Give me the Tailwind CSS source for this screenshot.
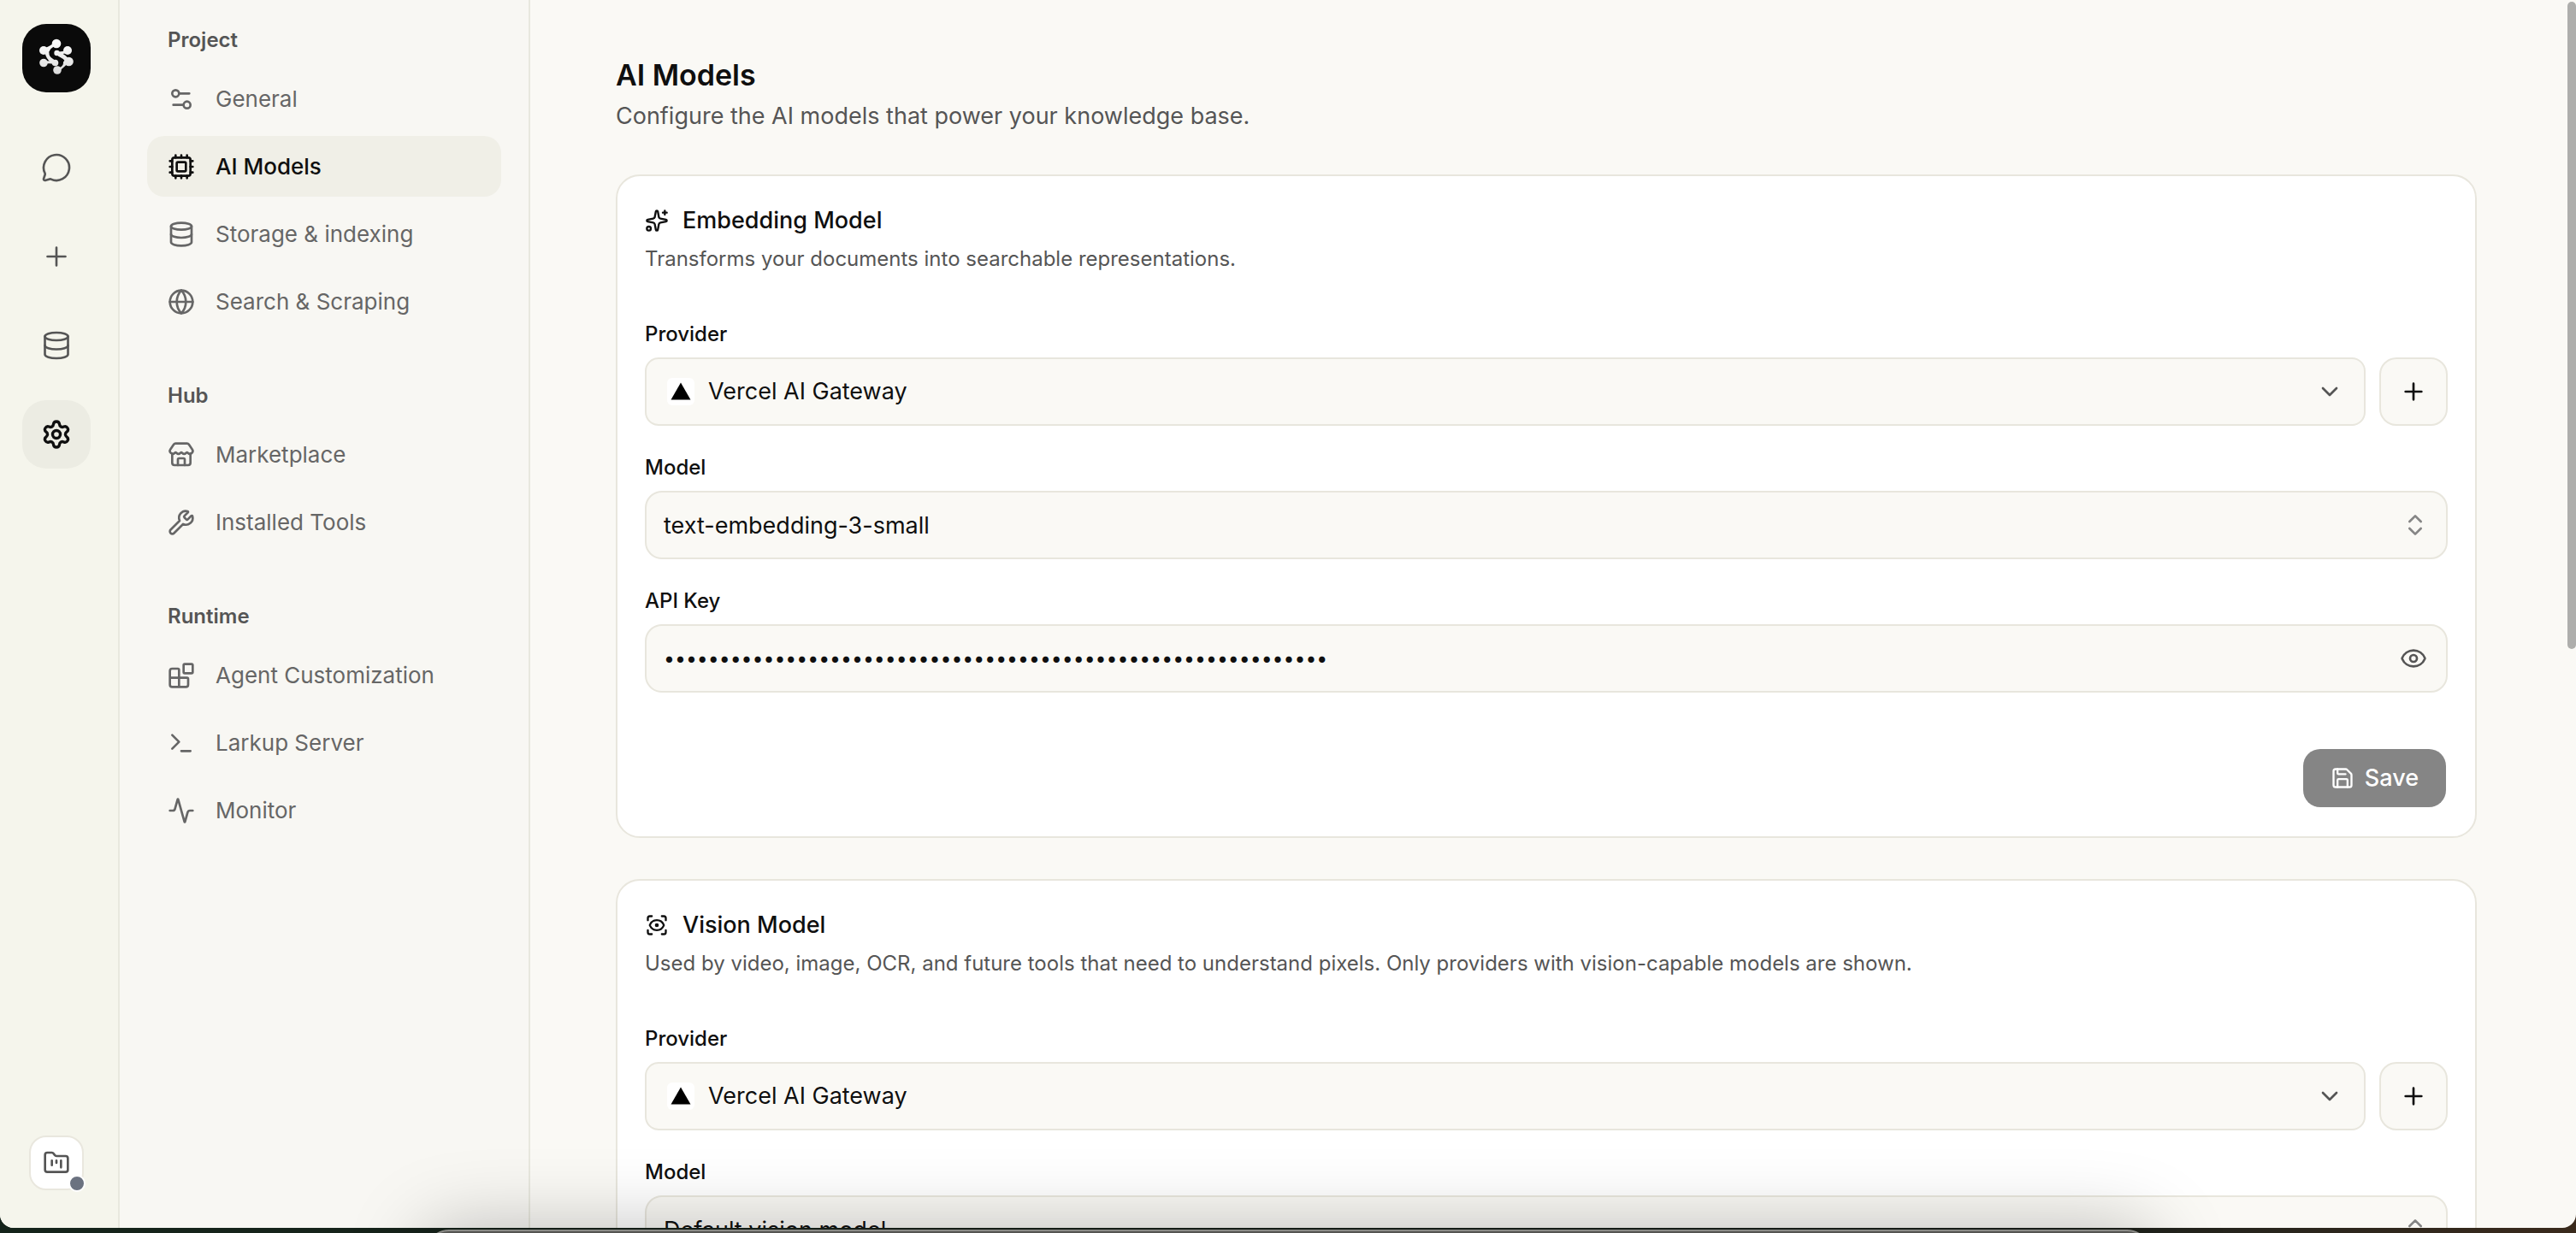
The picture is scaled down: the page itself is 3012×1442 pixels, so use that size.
<!DOCTYPE html>
<html lang="en">
<head>
  <meta charset="UTF-8">
  <meta name="viewport" content="width=device-width, initial-scale=1.0">
  <title>AI Models - Larkup</title>
  <script src="https://cdn.jsdelivr.net/npm/@tailwindcss/browser@4"></script>
  <style>
    body {
      font-family: Inter, "Liberation Sans", sans-serif;
    }
    /* line icons share the same drawing settings */
    .icon {
      fill: none;
      stroke: currentColor;
      stroke-linecap: round;
      stroke-linejoin: round;
      flex-shrink: 0;
    }
  </style>
</head>
<body class="relative h-screen overflow-hidden bg-linear-to-r from-[#14231a] via-[#1b211c] via-80% to-[#3a2a1c] text-[#0f0f0f]">

  <!-- App window -->
  <div class="flex h-[calc(100vh-6px)] overflow-hidden rounded-b-2xl bg-[#faf9f5]">

    <!-- Icon rail -->
    <aside class="flex w-[140px] shrink-0 flex-col items-start border-r-2 border-[#e8e8de] bg-[#f5f5ec] pt-7 pb-11 pl-[26px] text-[#555]">
      <a href="#" aria-label="Home" class="flex size-20 items-center justify-center rounded-[28px] bg-[#0a0a0a]">
        <svg class="size-[60px]" viewBox="0 0 60 60" stroke-linecap="round" fill="none">
          <defs>
            <linearGradient id="shine" x1="0" y1="8" x2="0" y2="50" gradientUnits="userSpaceOnUse">
              <stop offset="0" stop-color="#ffffff"/>
              <stop offset="1" stop-color="#d9d9d9"/>
            </linearGradient>
          </defs>
          <g stroke="url(#shine)">
            <path d="M29 14Q24 19 16 21" stroke-width="6"/>
            <path d="M19 23Q20 30 26 34" stroke-width="5"/>
            <path d="M34 26Q39 28 43 33Q38 38 32 43" stroke-width="5"/>
          </g>
          <path d="M39 16.500C31 14.500 22.500 20 23.500 25.500C24.500 31 35 28.500 36 34.500C36.500 38.500 33 40.500 25 41.500" stroke="#0a0a0a" stroke-width="4"/>
          <g stroke="url(#shine)" stroke-width="3">
            <path d="M43 21Q38 24.500 31 24"/>
            <path d="M15 35.500Q21 34 28 35.500"/>
          </g>
          <g fill="url(#shine)">
            <circle cx="30" cy="13" r="5.300"/>
            <circle cx="15" cy="21" r="5"/>
            <circle cx="43" cy="21" r="5"/>
            <circle cx="30.500" cy="24" r="3.200"/>
            <circle cx="15" cy="35.500" r="4.800"/>
            <circle cx="28.500" cy="35.500" r="3.800"/>
            <circle cx="44.500" cy="34" r="5.300"/>
            <circle cx="31" cy="44" r="4.800"/>
          </g>
        </svg>
      </a>
      <nav class="mt-12 flex flex-col gap-6">
        <button type="button" aria-label="Chat" class="flex size-20 items-center justify-center rounded-[28px]">
          <svg class="icon size-9" viewBox="0 0 24 24" stroke-width="1.75"><path d="M2.992 16.342a2 2 0 0 1 .094 1.167l-1.065 3.290a1 1 0 0 0 1.236 1.168l3.413-.998a2 2 0 0 1 1.099.092 10 10 0 1 0-4.777-4.719"/></svg>
        </button>
        <button type="button" aria-label="New" class="flex size-20 items-center justify-center rounded-[28px]">
          <svg class="icon size-9" viewBox="0 0 24 24" stroke-width="1.75"><path d="M5 12h14M12 5v14"/></svg>
        </button>
        <button type="button" aria-label="Data" class="flex size-20 items-center justify-center rounded-[28px]">
          <svg class="icon size-9" viewBox="0 0 24 24" stroke-width="1.75"><ellipse cx="12" cy="5" rx="9" ry="3"/><path d="M3 5v14a9 3 0 0 0 18 0V5"/><path d="M3 12a9 3 0 0 0 18 0"/></svg>
        </button>
        <button type="button" aria-label="Settings" class="flex size-20 items-center justify-center rounded-[28px] bg-[#ecece3] text-[#0f0f0f]">
          <svg class="icon size-9" viewBox="0 0 24 24" stroke-width="2.25"><path d="M9.671 4.136a2.340 2.340 0 0 1 4.659 0 2.340 2.340 0 0 0 3.319 1.915 2.340 2.340 0 0 1 2.330 4.033 2.340 2.340 0 0 0 0 3.831 2.340 2.340 0 0 1-2.330 4.033 2.340 2.340 0 0 0-3.319 1.915 2.340 2.340 0 0 1-4.659 0 2.340 2.340 0 0 0-3.320-1.915 2.340 2.340 0 0 1-2.330-4.033 2.340 2.340 0 0 0 0-3.831A2.340 2.340 0 0 1 6.350 6.051a2.340 2.340 0 0 0 3.319-1.915"/><circle cx="12" cy="12" r="3"/></svg>
        </button>
      </nav>
      <button type="button" aria-label="Switch project" class="relative mt-auto ml-2 flex size-16 items-center justify-center rounded-[20px] border-2 border-[#e9e7de] bg-white">
        <svg class="icon size-8" viewBox="0 0 24 24" stroke-width="2"><path d="M4 20h16a2 2 0 0 0 2-2V8a2 2 0 0 0-2-2h-7.930a2 2 0 0 1-1.660-.9l-.820-1.200A2 2 0 0 0 7.930 3H4a2 2 0 0 0-2 2v13c0 1.100.9 2 2 2Z"/><path d="M8 10v4M12 10v2M16 10v6"/></svg>
        <span class="absolute -right-1 -bottom-1 size-5 rounded-full border-2 border-white bg-[#6b7280]"></span>
      </button>
    </aside>

    <!-- Settings navigation -->
    <nav class="flex w-[480px] shrink-0 flex-col gap-[57px] border-r-2 border-[#e8e8de] bg-[#f8f7f3] px-8 pt-[29px] text-[26px] text-[#666]">
      <section>
        <h2 class="mb-[15px] pl-6 text-[24px] leading-9 font-semibold text-[#555]">Project</h2>
        <ul class="flex flex-col gap-2">
          <li><a href="#" class="flex h-[71px] items-center gap-6 rounded-[20px] px-6">
            <svg class="icon size-8" viewBox="0 0 24 24" stroke-width="2"><path d="M14 17H5M19 7h-9"/><circle cx="17" cy="17" r="3"/><circle cx="7" cy="7" r="3"/></svg>
            General</a></li>
          <li><a href="#" aria-current="page" class="flex h-[71px] items-center gap-6 rounded-[20px] bg-[#f0efe7] px-6 font-medium text-[#0f0f0f]">
            <svg class="icon size-8" viewBox="0 0 24 24" stroke-width="2"><path d="M12 20v2M12 2v2M17 20v2M17 2v2M2 12h2M2 17h2M2 7h2M20 12h2M20 17h2M20 7h2M7 20v2M7 2v2"/><rect x="4" y="4" width="16" height="16" rx="2"/><rect x="8" y="8" width="8" height="8" rx="1"/></svg>
            AI Models</a></li>
          <li><a href="#" class="flex h-[71px] items-center gap-6 rounded-[20px] px-6">
            <svg class="icon size-8" viewBox="0 0 24 24" stroke-width="2"><ellipse cx="12" cy="5" rx="9" ry="3"/><path d="M3 5v14a9 3 0 0 0 18 0V5"/><path d="M3 12a9 3 0 0 0 18 0"/></svg>
            Storage &amp; indexing</a></li>
          <li><a href="#" class="flex h-[71px] items-center gap-6 rounded-[20px] px-6">
            <svg class="icon size-8" viewBox="0 0 24 24" stroke-width="2"><circle cx="12" cy="12" r="10"/><path d="M12 2a14.500 14.500 0 0 0 0 20 14.500 14.500 0 0 0 0-20M2 12h20"/></svg>
            Search &amp; Scraping</a></li>
        </ul>
      </section>
      <section>
        <h2 class="mb-[15px] pl-6 text-[24px] leading-9 font-semibold text-[#555]">Hub</h2>
        <ul class="flex flex-col gap-2">
          <li><a href="#" class="flex h-[71px] items-center gap-6 rounded-[20px] px-6">
            <svg class="icon size-8" viewBox="0 0 24 24" stroke-width="2"><path d="M15 21v-5a1 1 0 0 0-1-1h-4a1 1 0 0 0-1 1v5"/><path d="M17.774 10.310a1.120 1.120 0 0 0-1.549 0 2.500 2.500 0 0 1-3.451 0 1.120 1.120 0 0 0-1.548 0 2.500 2.500 0 0 1-3.452 0 1.120 1.120 0 0 0-1.549 0 2.500 2.500 0 0 1-3.770-3.248l2.889-4.184A2 2 0 0 1 7 2h10a2 2 0 0 1 1.653.873l2.895 4.192a2.500 2.500 0 0 1-3.774 3.244"/><path d="M4 10.950V19a2 2 0 0 0 2 2h12a2 2 0 0 0 2-2v-8.050"/></svg>
            Marketplace</a></li>
          <li><a href="#" class="flex h-[71px] items-center gap-6 rounded-[20px] px-6">
            <svg class="icon size-8" viewBox="0 0 24 24" stroke-width="2"><path d="M14.700 6.300a1 1 0 0 0 0 1.400l1.600 1.600a1 1 0 0 0 1.400 0l3.106-3.105c.32-.322.863-.22.983.218a6 6 0 0 1-8.259 7.057l-7.910 7.910a1 1 0 0 1-2.999-3l7.910-7.910a6 6 0 0 1 7.057-8.259c.438.12.54.662.219.984z"/></svg>
            Installed Tools</a></li>
        </ul>
      </section>
      <section>
        <h2 class="mb-[15px] pl-6 text-[24px] leading-9 font-semibold text-[#555]">Runtime</h2>
        <ul class="flex flex-col gap-2">
          <li><a href="#" class="flex h-[71px] items-center gap-6 rounded-[20px] px-6">
            <svg class="icon size-8" viewBox="0 0 24 24" stroke-width="2"><path d="M10 22V7a1 1 0 0 0-1-1H4a2 2 0 0 0-2 2v12a2 2 0 0 0 2 2h12a2 2 0 0 0 2-2v-5a1 1 0 0 0-1-1H2"/><rect x="14" y="2" width="8" height="8" rx="1"/></svg>
            Agent Customization</a></li>
          <li><a href="#" class="flex h-[71px] items-center gap-6 rounded-[20px] px-6">
            <svg class="icon size-8" viewBox="0 0 24 24" stroke-width="2"><path d="M12 19h8M4 17l6-6-6-6"/></svg>
            Larkup Server</a></li>
          <li><a href="#" class="flex h-[71px] items-center gap-6 rounded-[20px] px-6">
            <svg class="icon size-8" viewBox="0 0 24 24" stroke-width="2"><path d="M22 12h-2.480a2 2 0 0 0-1.930 1.460l-2.350 8.360a.25.25 0 0 1-.48 0L9.240 2.180a.25.25 0 0 0-.48 0l-2.350 8.360A2 2 0 0 1 4.490 12H2"/></svg>
            Monitor</a></li>
        </ul>
      </section>
    </nav>

    <!-- Page content -->
    <main class="min-w-0 flex-1 overflow-hidden pt-[66px] pr-[116px] pl-[100px]">
      <h1 class="text-[34px] leading-[44px] font-semibold">AI Models</h1>
      <p class="mt-1.5 text-[27px] leading-10 text-[#555]">Configure the AI models that power your knowledge base.</p>

      <section class="mt-12 rounded-[28px] border-2 border-[#e8e6dd] bg-white px-8 pt-8 pb-[34px]">
        <h2 class="flex items-center gap-4 text-[27px] leading-10 font-medium">
          <svg class="icon size-7" viewBox="0 0 24 24" stroke-width="2"><path d="M11.017 2.814a1 1 0 0 1 1.966 0l1.051 5.558a2 2 0 0 0 1.594 1.594l5.558 1.051a1 1 0 0 1 0 1.966l-5.558 1.051a2 2 0 0 0-1.594 1.594l-1.051 5.558a1 1 0 0 1-1.966 0l-1.051-5.558a2 2 0 0 0-1.594-1.594l-5.558-1.051a1 1 0 0 1 0-1.966l5.558-1.051a2 2 0 0 0 1.594-1.594z"/><path d="M20 2v4M22 4h-4"/><circle cx="4" cy="20" r="2"/></svg>
          Embedding Model
        </h2>
        <p class="mt-1.5 text-[24px] leading-[38px] text-[#555]">Transforms your documents into searchable representations.</p>

        <div class="mt-[54px] flex flex-col gap-[34px]">
          <div>
            <label for="embedProvider" class="mb-3 block text-[24px] leading-[30px] font-medium">Provider</label>
            <div class="flex gap-4">
              <div class="relative flex-1">
                <select id="embedProvider" class="h-20 w-full appearance-none rounded-2xl border-2 border-[#e8e6dd] bg-[#faf9f5] pl-[72px] text-[27px]">
                  <option>Vercel AI Gateway</option>
                </select>
                <span class="pointer-events-none absolute top-6 left-[26px] flex size-8 items-center justify-center rounded-md bg-white">
                  <svg class="size-6" viewBox="0 0 24 24"><path d="M12 1.500L23.500 21.500H.5z"/></svg>
                </span>
                <svg class="icon pointer-events-none absolute top-6 right-[26px] size-8 text-[#555]" viewBox="0 0 24 24" stroke-width="2"><path d="m6 9 6 6 6-6"/></svg>
              </div>
              <button type="button" aria-label="Add provider" class="flex size-20 items-center justify-center rounded-[20px] border-2 border-[#e8e6dd] bg-[#faf9f5]">
                <svg class="icon size-8" viewBox="0 0 24 24" stroke-width="2"><path d="M5 12h14M12 5v14"/></svg>
              </button>
            </div>
          </div>

          <div>
            <label for="embedModel" class="mb-3 block text-[24px] leading-[30px] font-medium">Model</label>
            <div class="relative">
              <input id="embedModel" type="text" value="text-embedding-3-small" class="h-20 w-full rounded-[20px] border-2 border-[#e8e6dd] bg-[#faf9f5] pr-16 pl-5 text-[27px]">
              <svg class="icon pointer-events-none absolute top-6 right-[22px] size-8 text-[#858585]" viewBox="0 0 24 24" stroke-width="2"><path d="m7 15 5 5 5-5M7 9l5-5 5 5"/></svg>
            </div>
          </div>

          <div>
            <label for="embedKey" class="mb-3 block text-[24px] leading-[30px] font-medium">API Key</label>
            <div class="relative">
              <input id="embedKey" type="password" value="000000000000000000000000000000000000000000000000000000000000" class="h-20 w-full rounded-[20px] border-2 border-[#e8e6dd] bg-[#faf9f5] pr-20 pl-5 text-[23px]">
              <button type="button" aria-label="Show key" class="absolute top-6 right-6 text-[#555]">
                <svg class="icon size-8" viewBox="0 0 24 24" stroke-width="2"><path d="M2.062 12.348a1 1 0 0 1 0-.696 10.750 10.750 0 0 1 19.876 0 1 1 0 0 1 0 .696 10.750 10.750 0 0 1-19.876 0"/><circle cx="12" cy="12" r="3"/></svg>
              </button>
            </div>
          </div>
        </div>

        <div class="mt-[66px] flex justify-end pr-0.5">
          <button type="button" class="flex h-[68px] items-center gap-3 rounded-[20px] bg-[#858585] px-8 text-[27px] font-medium text-white">
            <svg class="icon size-7" viewBox="0 0 24 24" stroke-width="2"><path d="M15.200 3a2 2 0 0 1 1.400.6l3.800 3.800a2 2 0 0 1 .6 1.400V19a2 2 0 0 1-2 2H5a2 2 0 0 1-2-2V5a2 2 0 0 1 2-2z"/><path d="M17 21v-7a1 1 0 0 0-1-1H8a1 1 0 0 0-1 1v7M7 3v4a1 1 0 0 0 1 1h7"/></svg>
            Save
          </button>
        </div>
      </section>

      <section class="mt-12 rounded-[28px] border-2 border-[#e8e6dd] bg-white px-8 pt-8 pb-[34px]">
        <h2 class="flex items-center gap-4 text-[27px] leading-10 font-medium">
          <svg class="icon size-7" viewBox="0 0 24 24" stroke-width="2"><path d="M3 7V5a2 2 0 0 1 2-2h2M17 3h2a2 2 0 0 1 2 2v2M21 17v2a2 2 0 0 1-2 2h-2M7 21H5a2 2 0 0 1-2-2v-2"/><circle cx="12" cy="12" r="1"/><path d="M18.944 12.330a1 1 0 0 0 0-.660 7.500 7.500 0 0 0-13.888 0 1 1 0 0 0 0 .660 7.500 7.500 0 0 0 13.888 0"/></svg>
          Vision Model
        </h2>
        <p class="mt-1.5 text-[24px] leading-[38px] text-[#555]">Used by video, image, OCR, and future tools that need to understand pixels. Only providers with vision-capable models are shown.</p>

        <div class="mt-[54px] flex flex-col gap-[34px]">
          <div>
            <label for="visionProvider" class="mb-3 block text-[24px] leading-[30px] font-medium">Provider</label>
            <div class="flex gap-4">
              <div class="relative flex-1">
                <select id="visionProvider" class="h-20 w-full appearance-none rounded-2xl border-2 border-[#e8e6dd] bg-[#faf9f5] pl-[72px] text-[27px]">
                  <option>Vercel AI Gateway</option>
                </select>
                <span class="pointer-events-none absolute top-6 left-[26px] flex size-8 items-center justify-center rounded-md bg-white">
                  <svg class="size-6" viewBox="0 0 24 24"><path d="M12 1.500L23.500 21.500H.5z"/></svg>
                </span>
                <svg class="icon pointer-events-none absolute top-6 right-[26px] size-8 text-[#555]" viewBox="0 0 24 24" stroke-width="2"><path d="m6 9 6 6 6-6"/></svg>
              </div>
              <button type="button" aria-label="Add provider" class="flex size-20 items-center justify-center rounded-[20px] border-2 border-[#e8e6dd] bg-[#faf9f5]">
                <svg class="icon size-8" viewBox="0 0 24 24" stroke-width="2"><path d="M5 12h14M12 5v14"/></svg>
              </button>
            </div>
          </div>

          <div>
            <label for="visionModel" class="mb-3 block text-[24px] leading-[30px] font-medium">Model</label>
            <div class="relative">
              <input id="visionModel" type="text" value="Default vision model" class="h-20 w-full rounded-[20px] border-2 border-[#e8e6dd] bg-[#faf9f5] pr-16 pl-5 text-[27px]">
              <svg class="icon pointer-events-none absolute top-6 right-[22px] size-8 text-[#858585]" viewBox="0 0 24 24" stroke-width="2"><path d="m7 15 5 5 5-5M7 9l5-5 5 5"/></svg>
            </div>
          </div>
        </div>
      </section>
    </main>
  </div>

  <!-- Scrollbar thumb -->
  <div class="absolute top-0.5 right-0 h-[757px] w-2.5 rounded-[5px] bg-[#aeaeac]"></div>

  <!-- Dock peeking in at the bottom edge, casting its shadow upward -->
  <div class="pointer-events-none absolute inset-0 overflow-hidden">
    <div class="absolute top-[calc(100%-4px)] right-[497px] left-[497px] h-40 rounded-[28px] border-2 border-[#8a8a86] bg-[#555552] shadow-[0_0_90px_rgb(0_0_0_/_0.26)]"></div>
  </div>
</body>
</html>
